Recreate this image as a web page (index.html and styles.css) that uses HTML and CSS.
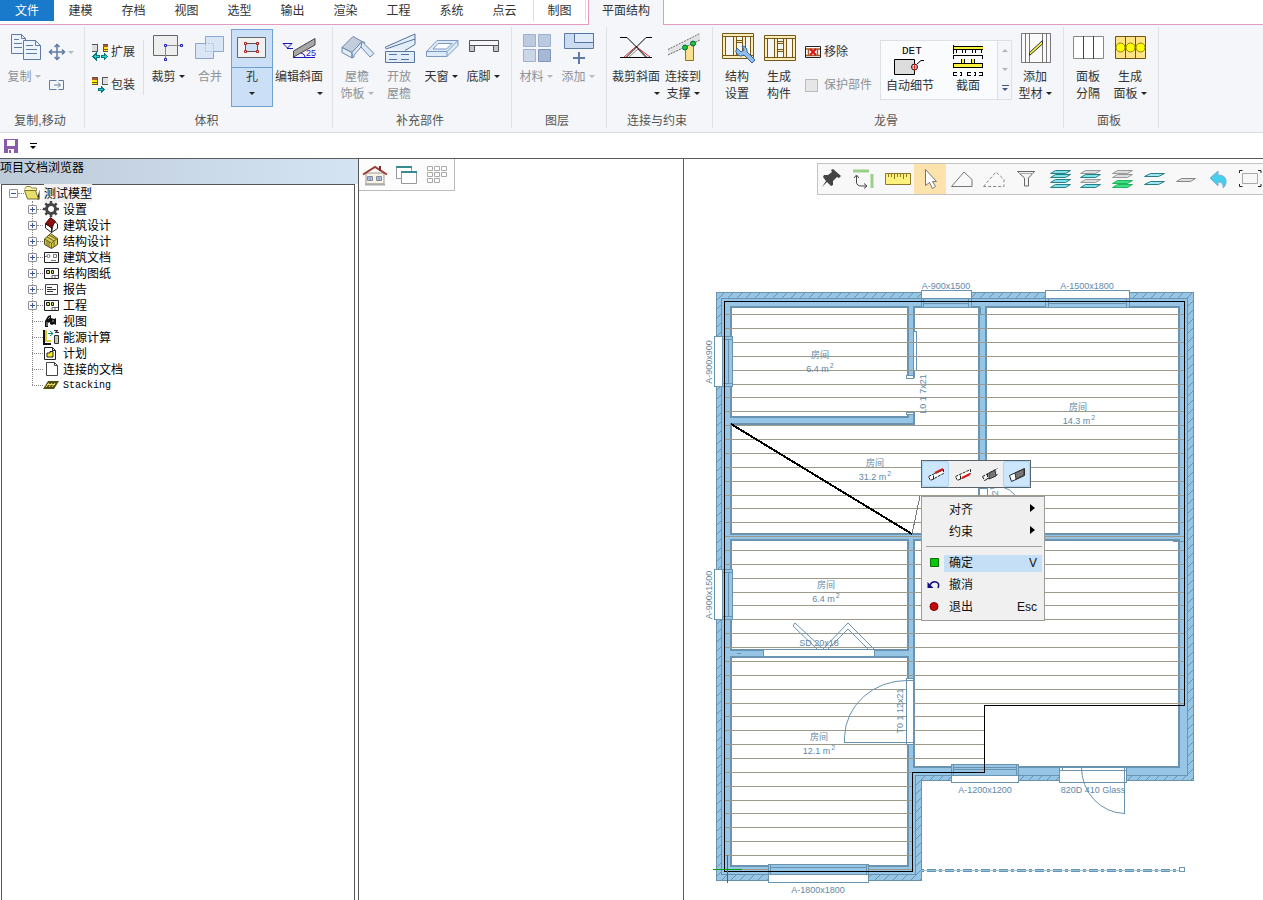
FILE: index.html
```html
<!DOCTYPE html>
<html lang="zh-CN">
<head>
<meta charset="utf-8">
<title>平面结构</title>
<link rel="stylesheet" href="styles.css">
</head>
<body>
<nav class="tabs">
  <button class="tab tab-file">文件</button>
  <button class="tab">建模</button>
  <button class="tab">存档</button>
  <button class="tab">视图</button>
  <button class="tab">选型</button>
  <button class="tab">输出</button>
  <button class="tab">渲染</button>
  <button class="tab">工程</button>
  <button class="tab">系统</button>
  <button class="tab">点云</button>
  <button class="tab tab-ruled">制图</button>
  <button class="tab tab-active">平面结构</button>
</nav>

<section class="ribbon">
  <div class="group">
    <div class="tools">
      <button class="big" disabled>
        <svg class="ico" viewBox="0 0 32 32" fill="#eef4fc" stroke="#5d7ba5"><path d="M3.500 3.500h10l4 4v15h-14z"/><path d="M13.500 3.500v4h4M6 8.500h5M6 12.500h8M6 16.500h8" fill="none"/><path d="M15.500 9.500h12l5 5v14h-17z"/><path d="M27.500 9.500v5h5M18 14.500h7M18 18.500h11M18 22.500h11" fill="none"/></svg>
        <span>复制<i class="caret"></i></span>
      </button>
      <div class="stack">
        <button class="small" disabled aria-label="移动"><svg class="ico16" viewBox="0 0 16 16" fill="none" stroke="#5d7ba5"><path d="M0 8h16M8 0v16M5.500 3L8 .5 10.500 3M5.500 13L8 15.500 10.500 13M3 5.500L.5 8 3 10.500M13 5.500L15.500 8 13 10.500" stroke-width="1.500"/></svg><i class="caret"></i></button>
        <button class="small" disabled aria-label="移动副本"><svg class="ico16" viewBox="0 0 16 16" fill="none" stroke="#5d7ba5"><path d="M7.500 3.500h-7v9h7M9.500 3.500h5v9h-5M5 8h6M9 5.500L11.500 8 9 10.500"/></svg></button>
      </div>
    </div>
    <h2>复制,移动</h2>
  </div>

  <div class="group">
    <div class="tools">
      <div class="stack stack-pack">
        <button class="small"><svg class="ico16" viewBox="0 0 16 16" shape-rendering="crispEdges"><path d="M0 .5h5.500v7H0" fill="#ddd" stroke="#555"/><path d="M16 .5h-5v7h5" fill="#ffe900" stroke="#555"/><path d="M11 1h5v2h-5z" fill="#b0552b"/><path d="M11 5h5v1h-5z" fill="#775a00"/><path d="M1 12.500l3-3v2h3v2H4v2zM15.500 12.500l-3-3v2h-3v2h3v2z" fill="#1ed6dc" stroke="#04777c"/></svg><span>扩展</span></button>
        <button class="small"><svg class="ico16" viewBox="0 0 16 16" shape-rendering="crispEdges"><path d="M0 .5h5v7H0" fill="#ffe900" stroke="#555"/><path d="M0 1h5v2H0z" fill="#b0552b"/><path d="M0 5h5v1H0z" fill="#775a00"/><path d="M16 .5h-5.500v7H16" fill="#ddd" stroke="#555"/><path d="M12 12.500l-3-3v2H6v2h3v2z" fill="#1ed6dc" stroke="#04777c"/></svg><span>包装</span></button>
      </div>
      <div class="rule"></div>
      <button class="big">
        <svg class="ico" viewBox="0 0 32 32"><path d="M1.500 4.500h24v20h-24z" fill="#eee" stroke="#666"/><path d="M14 14.500h15M13.500 14v14" stroke="#888"/><path d="M12.500 13.500h2v2h-2zM28.500 13.500h2v2h-2zM12.500 27.500h2v2h-2z" fill="#fff" stroke="#1818c0"/></svg>
        <span>裁剪<i class="caret"></i></span>
      </button>
      <button class="big" disabled>
        <svg class="ico" viewBox="0 0 32 32"><path d="M11.500 5.500h18v15h-10v7h-18v-15h10z" fill="#d9e6f6" stroke="#8ba5cc"/><path d="M11.500 12.500h8v8h-8z" fill="none" stroke="#8ba5cc" stroke-dasharray="1 2"/></svg>
        <span>合并</span>
      </button>
      <button class="big selected">
        <svg class="ico" viewBox="0 0 32 32"><path d="M1.500 6.500h28v20h-28z" fill="#f1f1f1" stroke="#666"/><path d="M9.500 12.500h12v8h-12z" fill="#cfe2f5" stroke="#555"/><path d="M8.500 11.500h2v2h-2zM20.500 11.500h2v2h-2zM8.500 19.500h2v2h-2zM20.500 19.500h2v2h-2z" fill="#fff" stroke="#b01818"/></svg>
        <span>孔</span><span><i class="caret"></i></span>
      </button>
      <button class="big wide">
        <svg class="ico" viewBox="0 0 32 32"><path d="M10.500 20L32 7.500V14L10.500 26z" fill="#a8a8a8" stroke="#444"/><path d="M0 12.500h9L4.500 17zM4 17.500h6M10 26.500h22M18 22q4 1 4 4" fill="none" stroke="#1818c0"/><text x="23" y="25" class="tiny-blue">25</text></svg>
        <span>编辑斜面</span><span class="right"><i class="caret"></i></span>
      </button>
    </div>
    <h2>体积</h2>
  </div>

  <div class="group">
    <div class="tools">
      <button class="big" disabled>
        <svg class="ico" viewBox="0 0 32 32" stroke="#6a86ad" stroke-linejoin="round"><path d="M1 16.500L12 5.500l9 5-10 11z" fill="#c3cddb"/><path d="M1 16.500v5l10 5.500v-5.500zM11 21.500l10-11 3 1-11 12.500v2l-2 1z" fill="#e2edfa"/><path d="M21 10.500l12 12-4 3.500-9-10z" fill="#dbe8f8"/></svg>
        <span>屋檐</span><span>饰板<i class="caret"></i></span>
      </button>
      <button class="big" disabled>
        <svg class="ico" viewBox="0 0 32 32" fill="#e2edfa" stroke="#55739c"><path d="M2.500 17.500V16L32 3v10.500l-10 6"/><path d="M3 18l29-10"/><path d="M2.500 20.500h29v11h-29z"/><path d="M6 23.500h8M18 23.500h8M6 28.500h8M18 28.500h8"/></svg>
        <span>开放</span><span>屋檐</span>
      </button>
      <button class="big">
        <svg class="ico" viewBox="0 0 32 32" fill="#dfeaf8" stroke="#7b98c2"><path d="M1.500 20.500L12 9.500h21v5l-11 11H1.500z"/><path d="M1.500 20.500h20.500v5M22 20.500l11-11" fill="none"/><path d="M8 18l5-5.500h14L21.500 18z" fill="#f8fbff"/></svg>
        <span>天窗<i class="caret"></i></span>
      </button>
      <button class="big">
        <svg class="ico" viewBox="0 0 32 32" stroke="#505058"><path d="M2.500 9.500h29v5h-29z" fill="#f7f7fa"/><path d="M2.500 14.500h5v6h-5zM26.500 14.500h5v6h-5z" fill="#c8c4d2"/></svg>
        <span>底脚<i class="caret"></i></span>
      </button>
    </div>
    <h2>补充部件</h2>
  </div>

  <div class="group">
    <div class="tools">
      <button class="big" disabled>
        <svg class="ico" viewBox="0 0 32 32" stroke="#9db1d0"><path d="M3.500 3.500h12v12h-12zM18.500 3.500h12v12h-12z" fill="#bccae0"/><path d="M3.500 18.500h12v12h-12z" fill="#cbd6e8"/><path d="M18.500 18.500h12v12h-12z" fill="#a8b8d2" stroke="#7f97bf"/></svg>
        <span>材料<i class="caret"></i></span>
      </button>
      <button class="big" disabled>
        <svg class="ico" viewBox="0 0 32 32"><path d="M2.500 2.500h29v15h-29z" fill="#cbdcf2" stroke="#5d7ba5"/><path d="M12.500 2.500h19v9h-19z" fill="#dfeafa" stroke="#55739c"/><path d="M17 21v12M11 27h12" stroke="#5d7ba5" stroke-width="2"/></svg>
        <span>添加<i class="caret"></i></span>
      </button>
    </div>
    <h2>图层</h2>
  </div>

  <div class="group group-join">
    <div class="tools">
      <button class="big wide">
        <svg class="ico" viewBox="0 0 32 32" fill="none"><path d="M4 26L16 15.500 30 26" stroke="#e03030"/><path d="M9 26l9-8 7 8" stroke="#888"/><path d="M0 6.500h7l20 20M32 6.500h-6l-20 20M0 26.500h32" stroke="#000"/></svg>
        <span>裁剪斜面</span><span class="right"><i class="caret"></i></span>
      </button>
      <button class="big">
        <svg class="ico" viewBox="0 0 32 32"><path d="M18.500 14l8-3v18.500h-8z" fill="#f9e08a" stroke="#8a7330"/><path d="M1 19L33 3v7L1 24z" fill="#e3e3e3"/><path d="M1 18.500L33 2.500M1 24L33 9" stroke="#666" stroke-dasharray="2 1"/><circle cx="18" cy="16.500" r="2.500" fill="#18c830" stroke="#064"/><circle cx="26" cy="12.500" r="2.500" fill="#18c830" stroke="#064"/></svg>
        <span>连接到</span><span>支撑<i class="caret"></i></span>
      </button>
    </div>
    <h2>连接与约束</h2>
  </div>

  <div class="group">
    <div class="tools">
      <button class="big">
        <svg class="ico" viewBox="0 0 32 32"><path d="M1.500 2.500h31v25h-31z" fill="#f6f6f6" stroke="none"/><path d="M1.500 2.500h31v3h-31zM1.500 24.500h31v3h-31zM1.500 5.500h3v19h-3zM12.500 5.500h3v19h-3zM21.500 5.500h3v19h-3zM29.500 5.500h3v19h-3zM15.500 9.500h6v2h-6z" fill="#ffecb8" stroke="#725716"/><path d="M16 17a5 5 0 0 0 7 7l8 8 3-3-8-8a5 5 0 0 0-5-6l2 4-3 2z" fill="#8fbdec" stroke="#31639e"/></svg>
        <span>结构</span><span>设置</span>
      </button>
      <button class="big">
        <svg class="ico" viewBox="0 0 32 32"><path d="M1.500 4.500h31v3h-31zM1.500 26.500h31v3h-31zM1.500 7.500h3v19h-3zM11.500 7.500h3v19h-3zM20.500 7.500h3v19h-3zM29.500 7.500h3v19h-3zM14.500 10.500h6v2h-6zM14.500 18.500h6v2h-6z" fill="#ffecb8" stroke="#725716"/></svg>
        <span>生成</span><span>构件</span>
      </button>
      <div class="stack stack-frame">
        <button class="small"><svg class="ico16" viewBox="0 0 16 16"><path d="M.5 2.500h15v11H.5z" fill="#fff" stroke="#222"/><path d="M1 5h14M1 11.500h14M3.500 5v6M12.500 5v6" stroke="#a65a28" stroke-width="1.500"/><path d="M5 5l6 6M11 5l-6 6" stroke="#e01010" stroke-width="2"/></svg><span>移除</span></button>
        <label class="small muted"><input type="checkbox" disabled><span>保护部件</span></label>
      </div>
      <div class="gallery">
        <button class="card">
          <svg viewBox="0 0 36 36"><text x="10" y="12" class="det">DET</text><path d="M2.500 17.500h20v15h-20z" fill="#ddd" stroke="#000"/><circle cx="22.500" cy="25" r="3" fill="#fff" stroke="#000"/><path d="M19 25h7M22.500 21.500v7" stroke="#d22"/><path d="M25 22l4-3.500h3" stroke="#000" fill="none"/></svg>
          <span>自动细节</span>
        </button>
        <button class="card">
          <svg viewBox="0 0 36 36" shape-rendering="crispEdges"><path d="M3 4h30v3H3zM3 22h30v3H3zM12 17h2v5h-2zM22 17h2v5h-2z" fill="#fbf03a"/><path d="M3 4.500h30M3 7.500h30M3.500 3v9M6.500 8v3M12.500 8v3M15.500 8v3M22.500 8v3M25.500 8v3M31.500 8v3M3 13.500h30M3.500 13v4M32.500 13v4M11.500 17v5M14.500 17v5M21.500 17v5M24.500 17v5M3 21.500h30M3 25.500h30M3.500 21v4M32.500 21v4M7 30.500H3.500v3H7M10 30.500h1v3h-1M21 30.500h-4v3h4M24 30.500h1v3h-1M29 30.500h3.500v3H29" fill="none" stroke="#000"/></svg>
          <span>截面</span>
        </button>
        <div class="scroller">
          <button aria-label="上一行"><i class="caret up"></i></button>
          <button aria-label="下一行"><i class="caret dim"></i></button>
          <button aria-label="更多"><i class="caret more"></i></button>
        </div>
      </div>
      <button class="big">
        <svg class="ico" viewBox="0 0 32 32"><path d="M2.500 2.500h29v29h-29z" fill="#fafafa" stroke="#777"/><path d="M6.500 3v28M10.500 3v28M23.500 3v28M27.500 3v28" stroke="#777"/><path d="M10.500 21.500L23.500 9.500v3.500l-13 11.500z" fill="#f6ee40" stroke="#333"/></svg>
        <span>添加</span><span>型材<i class="caret"></i></span>
      </button>
    </div>
    <h2>龙骨</h2>
  </div>

  <div class="group">
    <div class="tools">
      <button class="big">
        <svg class="ico" viewBox="0 0 32 32"><path d="M1.500 5.500h30v22h-30z" fill="#fff" stroke="#888"/><path d="M11.500 5v23M21.500 5v23" stroke="#c01010"/></svg>
        <span>面板</span><span>分隔</span>
      </button>
      <button class="big">
        <svg class="ico" viewBox="0 0 32 32"><path d="M1.500 5.500h30v22h-30z" fill="#ffe385" stroke="#6b5514"/><path d="M11.500 5v23M21.500 5v23" stroke="#6b5514"/><g fill="#ff0" stroke="#8f7d10"><circle cx="6.500" cy="16.500" r="4.500"/><circle cx="16.500" cy="16.500" r="4.500"/><circle cx="26.500" cy="16.500" r="4.500"/></g></svg>
        <span>生成</span><span>面板<i class="caret"></i></span>
      </button>
    </div>
    <h2>面板</h2>
  </div>
</section>

<div class="quick">
  <button aria-label="保存"><svg viewBox="0 0 14 14"><path d="M0 0h14v14H0z" fill="#8a5bab"/><path d="M3 1h8v6H3zM4 10h6v4H4z" fill="#fff"/><path d="M5 11h2v3H5z" fill="#8a5bab"/></svg></button>
  <button aria-label="自定义工具栏"><i class="caret more black"></i></button>
</div>

<main class="work">
  <aside class="browser">
    <h1>项目文档浏览器</h1>
    <div class="tree">
      <div class="node root"><button class="exp" aria-label="折叠"></button><i class="dots"></i>
        <svg viewBox="0 0 16 16"><path d="M.5 4.500l2-3h4l1 1.500h5v3" fill="#fff6a8" stroke="#8a8a50"/><path d="M13 14.500l2.500-10v10z" fill="#222"/><path d="M.5 5.500h11l3 8.500h-11z" fill="#e8de6c" stroke="#77722f"/></svg><span class="hot">测试模型</span></div>
      <ul>
        <li class="node"><button class="exp plus" aria-label="展开"></button><i class="dots"></i><svg viewBox="0 0 16 16"><circle cx="8" cy="8" r="4.500" fill="none" stroke="#444" stroke-width="3"/><path d="M8 0v3M8 13v3M0 8h3M13 8h3M2.300 2.300l2.200 2.200M11.500 11.500l2.200 2.200M2.300 13.700l2.200-2.200M11.500 4.500l2.200-2.200" stroke="#444" stroke-width="2.500"/></svg><span>设置</span></li>
        <li class="node"><button class="exp plus" aria-label="展开"></button><i class="dots"></i><svg viewBox="0 0 16 16"><path d="M2.500 7v4l6 4.500V10zM8.500 15.500l6-4V7L11 4z" fill="#fff" stroke="#222"/><path d="M2.500 6.500L7.500.5l5 4-4.500 6z" fill="#8c1010" stroke="#400"/></svg><span>建筑设计</span></li>
        <li class="node"><button class="exp plus" aria-label="展开"></button><i class="dots"></i><svg viewBox="0 0 16 16"><path d="M1.500 6l6-5.500 7 5v6l-6 4-7-4z" fill="#d8cc58" stroke="#4c4510"/><path d="M1.500 6l7 4 6-4.500M8.500 10v5M4 7.500v5M6 9v5M11 8.500v5M4 4l7 4M6 2l7 4" fill="none" stroke="#6b6420"/></svg><span>结构设计</span></li>
        <li class="node"><button class="exp plus" aria-label="展开"></button><i class="dots"></i><svg viewBox="0 0 16 16"><path d="M1.500 3.500h14v10h-14z" fill="#fff" stroke="#222"/><circle cx="5.500" cy="7" r="1.500" fill="none" stroke="#777"/><path d="M10.500 5.500h3v3h-3zM8 11.500h5M2 7.500h2" fill="none" stroke="#777"/></svg><span>建筑文档</span></li>
        <li class="node"><button class="exp plus" aria-label="展开"></button><i class="dots"></i><svg viewBox="0 0 16 16"><path d="M1.500 3.500h14v10h-14z" fill="#fff" stroke="#222"/><path d="M3.500 5.500h3v3h-3zM8.500 5.500h2v3h-2z" fill="#dd5" stroke="#222"/><path d="M9 13v-2.500h6M12 11v2" stroke="#666" fill="none"/></svg><span>结构图纸</span></li>
        <li class="node"><button class="exp plus" aria-label="展开"></button><i class="dots"></i><svg viewBox="0 0 16 16"><path d="M2.500 3.500h12v10h-12z" fill="#fff" stroke="#444"/><path d="M4 6.500h5M4 8.500h9M4 10.500h6" stroke="#333"/></svg><span>报告</span></li>
        <li class="node"><button class="exp plus" aria-label="展开"></button><i class="dots"></i><svg viewBox="0 0 16 16"><path d="M1.500 3.500h14v10h-14z" fill="#fff" stroke="#222"/><path d="M3.500 5.500h3v3h-3zM8.500 5.500h2v3h-2z" fill="#dd5" stroke="#222"/><path d="M9 13v-2.500h6M12 11v2" stroke="#666" fill="none"/></svg><span>工程</span></li>
        <li class="node leaf"><i class="dots"></i><svg viewBox="0 0 16 16"><path d="M2 8l3-5 3-1v3l3 1 2-1v7l-2-1-2 1-2-1v-2l-2 1v4H2z" fill="#111"/><path d="M5 6l2-2M4 9v4M9 8h2" stroke="#aaa"/></svg><span>视图</span></li>
        <li class="node leaf"><i class="dots"></i><svg viewBox="0 0 16 16"><path d="M1 1v14h7" fill="none" stroke="#111" stroke-width="2"/><path d="M3 1v11h5" fill="none" stroke="#dc3" stroke-width="2"/><path d="M5 4.500h5M7 2l3 2.500L7 7" stroke="#088" fill="none"/><path d="M11.500 6.500h4v8h-4z" fill="#bfcfae" stroke="#333"/><path d="M11 1.500h4l-3 2h4" fill="none" stroke="#333"/></svg><span>能源计算</span></li>
        <li class="node leaf"><i class="dots"></i><svg viewBox="0 0 16 16"><path d="M1.500 2.500h8l3 3v9h-11z" fill="#fff" stroke="#222"/><path d="M9.500 2.500v3h3" fill="none" stroke="#222"/><path d="M4 12V8h3V6.500h3V12z" fill="#ffee20" stroke="#222"/></svg><span>计划</span></li>
        <li class="node leaf"><i class="dots"></i><svg viewBox="0 0 16 16"><path d="M3.500 1.500h8l3 3v10h-11z" fill="#fff" stroke="#444"/><path d="M11.500 1.500v3h3" fill="none" stroke="#444"/></svg><span>连接的文档</span></li>
        <li class="node leaf"><i class="dots"></i><svg viewBox="0 0 16 16"><path d="M5 4h11l-5 8H0z" fill="#554d10"/><path d="M3 10l3-4M6 10l3-4M9 10l3-4M4 7.500h8" stroke="#e5dc60"/></svg><span class="latin">Stacking</span></li>
      </ul>
    </div>
  </aside>

  <section class="pane-left">
    <div class="viewbar">
      <button aria-label="主视图"><svg viewBox="0 1 32 31"><path d="M7 15h18v11H7z" fill="#f7f3e4" stroke="#999"/><path d="M6 25.500h20v2H6z" fill="#aaa"/><path d="M4 16.500L16 9l12 7.500" fill="none" stroke="#9c3b33" stroke-width="2"/><path d="M20 8h2v5h-2z" fill="#7d2f2a"/><path d="M8.500 18.500h5v4h-5zM17.500 18.500h5v4h-5z" fill="#a9c9ea" stroke="#889"/><path d="M11 18v5M20 18v5" stroke="#889"/></svg></button>
      <button aria-label="窗口"><svg viewBox="0 0 32 31"><path d="M5.500 8.500h15v11h-15z" fill="#fff" stroke="#999"/><path d="M5 8h16" stroke="#3b8b8d" stroke-width="2"/><path d="M10.500 13.500h15v11h-15z" fill="#fff" stroke="#999"/><path d="M10 13h16" stroke="#3b8b8d" stroke-width="2"/></svg></button>
      <button aria-label="网格"><svg viewBox="0 0 32 31"><path d="M4.500 7.500h5v4h-5zM11.500 7.500h5v4h-5zM18.500 7.500h5v4h-5zM4.500 13.500h5v4h-5zM11.500 13.500h5v4h-5zM18.500 13.500h5v4h-5zM4.500 19.500h5v4h-5zM11.500 19.500h5v4h-5z" fill="#fff" stroke="#aaa"/></svg></button>
    </div>
  </section>

  <section class="pane-plan">
    <svg class="plan" viewBox="684 159 579 741">
      <defs>
        <pattern id="hatch" width="9" height="9" patternUnits="userSpaceOnUse"><path d="M-1 10L10-1" stroke="#6a93b0"/></pattern>
      </defs>
      <g shape-rendering="crispEdges" stroke="#6a93b0" fill="#96c5e5">
        <path d="M716.500 292.500h477v488h-272v100h-205z"/>
        <path d="M716.500 292.500h477v488h-272v100h-205z" fill="url(#hatch)" shape-rendering="auto"/>
        <path d="M721.500 298.500h466v477h-272v99h-194z"/>
        <g fill="#fff" stroke-width="2">
          <path d="M731 307h177v110H731z"/>
          <path d="M914 307h65v227H731V424h183z"/>
          <path d="M986 307h193v227H986z"/>
          <path d="M731 540h177v110H731z"/>
          <path d="M731 657h177v209H731z"/>
          <path d="M914 540h265v227H914z"/>
        </g>
        <path d="M907 378h8v34h-8z" fill="#fff" stroke="none"/>
        <path d="M906.500 375.500h7v3h-7zM906.500 412.500h7v2h-7z" fill="#fff"/>
        <path d="M913.500 331.500h3v39h-3z" fill="#fff"/>
        <path d="M979 488h8v45h-8z" fill="#fff"/>
      </g>
      <g shape-rendering="crispEdges" fill="none" stroke="#9c998a">
        <path d="M725 314.500h459M725 328.500h459M725 342.500h459M725 356.500h459M725 370.500h459M725 384.500h459M725 397.500h459M725 411.500h459M725 425.500h459M725 439.500h459M725 453.500h459M725 467.500h459M725 481.500h459M725 495.500h459M725 508.500h459M725 522.500h459M725 536.500h459M725 550.500h459M725 564.500h459M725 578.500h459M725 592.500h459M725 605.500h459M725 619.500h459M725 633.500h459M725 647.500h459M725 661.500h459M725 675.500h459M725 689.500h459M725 703.500h459"/>
        <path d="M725 716.500h259M725 730.500h259M725 744.500h259M725 758.500h259"/>
        <path d="M725 772.500h187M725 786.500h187M725 800.500h187M725 813.500h187M725 827.500h187M725 841.500h187M725 855.500h187M725 869.500h187"/>
      </g>
      <g shape-rendering="crispEdges" stroke="#6a93b0">
        <path d="M921.500 290.500h50v8h-50zM1045.500 290.500h84v8h-84zM714.500 336.500h8v50h-8zM714.500 569.500h8v50h-8zM768.500 874.500h100v8h-100zM951.500 775.500h67v7h-67z" fill="#fff"/>
        <path d="M921.500 298.500h50v9h-50zM1045.500 298.500h84v9h-84zM722.500 336.500h10v50h-10zM722.500 569.500h10v50h-10zM768.500 864.500h100v10h-100zM951.500 764.500h67v11h-67z" fill="#96c5e5"/>
        <path d="M923.500 299v8M968.500 299v8M1048.500 299v8M1126.500 299v8M923 303.500h46M1048 303.500h79M723 339.500h10M723 383.500h10M728.500 339v44M723 572.500h10M723 616.500h10M728.500 572v44M770.500 865v9M866.500 865v9M770 867.500h96M953.500 765v10M1016.500 765v10M953 767.500h63M953 769.500h63" fill="none"/>
        <path d="M1059.500 767.500h67v15h-67z" fill="#fff"/>
        <path d="M1060 770.500h66M1062.500 767v4M1124.500 767v46.500" fill="none"/>
        <path d="M763.500 649.500h111v7h-111zM906.500 678.500h7v66h-7z" fill="#fff"/>
        <path d="M844 742.500h70M844.500 742v-5M906 680.500h8M737 653.500h4M978.500 307v8M980.500 307v8M1171 539.500h8M1173 541.500h11" fill="none"/>
      </g>
      <g fill="none" stroke="#6a93b0">
        <path d="M844.500 737A62 58 0 0 1 907 680.500M1081.500 767A44 46 0 0 0 1124.500 813.500M990 489q15-6 25 6"/>
        <path d="M793 626l2-3 27 25M793 626l24 23M823 649l25-26 26 26M828 649l20-20 20 20"/>
      </g>
      <g class="plan-text">
        <text x="946" y="289">A-900x1500</text>
        <text x="1087" y="289">A-1500x1800</text>
        <text x="985" y="793">A-1200x1200</text>
        <text x="1093" y="793">820D 410 Glass</text>
        <text x="818" y="893">A-1800x1800</text>
        <text x="819" y="646">SD 20x18</text>
        <text transform="translate(712 362) rotate(-90)">A-900x900</text>
        <text transform="translate(712 595) rotate(-90)">A-900x1500</text>
        <text transform="translate(926 394) rotate(-90)">L0 1 7x21</text>
        <text transform="translate(903 711) rotate(-90)">T0 1 12x21</text>
        <text transform="translate(998 493) rotate(-90)">2</text>
        <text x="820" y="358">房间</text><text x="820" y="372">6.4 m<tspan class="sup" dx="1" dy="-4">2</tspan></text>
        <text x="875" y="466">房间</text><text x="875" y="480">31.2 m<tspan class="sup" dx="1" dy="-4">2</tspan></text>
        <text x="1078" y="410">房间</text><text x="1079" y="424">14.3 m<tspan class="sup" dx="1" dy="-4">2</tspan></text>
        <text x="826" y="588">房间</text><text x="826" y="602">6.4 m<tspan class="sup" dx="1" dy="-4">2</tspan></text>
        <text x="819" y="740">房间</text><text x="819" y="754">12.1 m<tspan class="sup" dx="1" dy="-4">2</tspan></text>
      </g>
      <g fill="none" stroke="#000" shape-rendering="crispEdges">
        <path d="M724.500 301.500h460v404h-200v67h-72v99h-188z"/>
        <path d="M731 424l181 110" stroke-width="2"/>
        <path d="M912 534l8-38" stroke="#777"/>
        <path d="M921 870h258" stroke="#6a93b0" stroke-width="3" stroke-dasharray="3 3 9 3"/>
        <path d="M921 870h258" stroke="#96c5e5"/>
        <path d="M1179.500 867.500h5v4h-5z" fill="#fff" stroke="#6a93b0"/>
        <path d="M713 869.500h29M727.500 855v28" stroke="#00a010"/>
      </g>
    </svg>

    <div class="toolbar">
      <button aria-label="固定"><svg viewBox="0 0 32 30"><path d="M15 5l8 7-2 2-2-1-4 4v4l-2 1-4-4-5 5 4-6-3-4 1-2h4l4-3-1-2z" fill="#444"/></svg></button>
      <button aria-label="旋转"><svg viewBox="4 0 32 30" fill="none"><path d="M7 7h16M26 10v14" stroke="#9ad08a" stroke-width="3"/><path d="M10.500 12v6q0 4 5 4h5M8 14l2.500-3 2.500 3M18 19.500l3 2.500-3 2.500" stroke="#444"/></svg></button>
      <button aria-label="测量"><svg viewBox="0 0 32 30"><path d="M3.500 9.500h25v11h-25z" fill="#fff27c" stroke="#8f7628"/><path d="M6.500 10v3M9.500 10v3M12.500 10v5M15.500 10v3M18.500 10v3M21.500 10v5M24.500 10v3" stroke="#8f7628"/></svg></button>
      <button class="on" aria-label="选择"><svg viewBox="0 0 32 30"><path d="M11.500 5.500v16l4-3 3 6 3-2-3-5h4z" fill="#fff" stroke="#777"/></svg></button>
      <button aria-label="多边形"><svg viewBox="0 0 32 30"><path d="M5.500 22.500L18 8l8 7.500v7z" fill="none" stroke="#777"/></svg></button>
      <button aria-label="虚线多边形"><svg viewBox="0 0 32 30"><path d="M5.500 22.500L18 8l8 7.500v7z" fill="none" stroke="#888" stroke-dasharray="3 2"/></svg></button>
      <button aria-label="筛选"><svg viewBox="0 0 32 30"><path d="M7.500 7.500h17l-6 6.500v8h-4v-8z" fill="#f4f4f4" stroke="#666"/><path d="M9 9.500h14" stroke="#aaa"/></svg></button>
      <button aria-label="全部图层"><svg viewBox="0 0 32 30" fill="#7fe3ea" stroke="#2b7d85"><path d="M8.500 23.500l5-3h15l-5 3zM8.500 18.500l5-3h15l-5 3zM8.500 13.500l5-3h15l-5 3zM8.500 9.500l5-3h15l-5 3z"/></svg></button>
      <button aria-label="部分图层"><svg viewBox="0 0 32 30" fill="#7fe3ea" stroke="#2b7d85"><path d="M6.500 23.500l5-3h15l-5 3zM6.500 13.500l5-3h15l-5 3z"/><path d="M6.500 18.500l5-3h15l-5 3zM6.500 9.500l5-3h15l-5 3z" fill="#ddd" stroke="#999"/></svg></button>
      <button aria-label="当前图层"><svg viewBox="0 0 32 30"><path d="M6.500 13.500l5-3h15l-5 3zM6.500 9.500l5-3h15l-5 3z" fill="#ddd" stroke="#999"/><path d="M6.500 19.500l5-3h15l-5 3zM6.500 23.500l5-3h15l-5 3z" fill="#3de080" stroke="#23b060"/></svg></button>
      <button aria-label="两层"><svg viewBox="0 0 32 30" fill="#9fe9ee" stroke="#2b7d85"><path d="M6.500 20.500l6-3h14l-6 3zM6.500 12.500l6-3h14l-6 3z"/></svg></button>
      <button aria-label="单层"><svg viewBox="0 0 32 30"><path d="M6.500 17.500l5-3h14l-5 3z" fill="#ddd" stroke="#888"/></svg></button>
      <button aria-label="返回"><svg viewBox="0 0 32 30"><path d="M8 14l8-7v4q9 0 8 8-1 4-3 5 1-6-5-6v4z" fill="#45cfe9" stroke="#8ad"/></svg></button>
      <button aria-label="全屏"><svg viewBox="0 0 32 30" fill="none"><path d="M8.500 9.500h15v10h-15z" stroke="#aaa"/><path d="M5.500 9v-2.500h3M24 6.500h3V9M5.500 20v2.500h3M24 22.500h3V20" stroke="#222"/></svg></button>
    </div>

    <div class="mini">
      <button class="on" aria-label="上边"><svg viewBox="0 0 27 26"><path d="M6.500 15.500l15-7v4l-13 7z" fill="#fff" stroke="#222" stroke-dasharray="3 1"/><path d="M11.500 14.500v4M14 12l7-3" stroke="#222"/><path d="M13 12l8-4" stroke="#e01818" stroke-width="2"/></svg></button>
      <button aria-label="下边"><svg viewBox="0 0 27 26"><path d="M6.500 15.500l15-7v4l-13 7z" fill="#fff" stroke="#222" stroke-dasharray="3 1"/><path d="M11.500 14.500v4" stroke="#222"/><path d="M13 17l8-4" stroke="#e01818" stroke-width="2"/></svg></button>
      <button aria-label="中间"><svg viewBox="0 0 27 26"><path d="M6.500 15.500l15-8M8.500 19.500l13-6M6.500 15.500l2 4M11.500 13v5" fill="none" stroke="#222" stroke-dasharray="3 1"/><path d="M13 12l6-3 1 6-7 3z" fill="#777" stroke="#333"/></svg></button>
      <button class="on" aria-label="全部"><svg viewBox="0 0 27 26"><path d="M6.500 14.500l15-7v7l-13 6z" fill="#fff" stroke="#222"/><path d="M12 12l9-4v6l-8 4z" fill="#777" stroke="#333"/></svg></button>
    </div>

    <div class="menu" role="menu">
      <button role="menuitem"><i class="mark"></i><span>对齐</span><i class="sub"></i></button>
      <button role="menuitem"><i class="mark"></i><span>约束</span><i class="sub"></i></button>
      <hr>
      <button role="menuitem" class="hover"><svg class="mark" viewBox="0 0 16 16"><path d="M4.500 3.500h8v8h-8z" fill="#08c808" stroke="#067006"/></svg><span>确定</span><kbd>V</kbd></button>
      <button role="menuitem"><svg class="mark" viewBox="0 0 16 16"><path d="M4 8q2-4 6-3 4 1 2 6" fill="none" stroke="#101080" stroke-width="1.500"/><path d="M1.500 5v6h6z" fill="#101080"/></svg><span>撤消</span></button>
      <button role="menuitem"><svg class="mark" viewBox="0 0 16 16"><circle cx="8" cy="7.500" r="4" fill="#c80808" stroke="#700"/></svg><span>退出</span><kbd>Esc</kbd></button>
    </div>
  </section>
</main>
</body>
</html>
```

FILE: styles.css
```css
* { box-sizing: border-box; }

body {
  margin: 0;
  height: 100vh;
  display: flex;
  flex-direction: column;
  overflow: hidden;
  background: #fff;
  color: #333;
  font: 12px/16px "Liberation Sans", "Noto Sans CJK SC", sans-serif;
}

button {
  margin: 0;
  padding: 0;
  border: 0;
  background: none;
  color: inherit;
  font: inherit;
}

svg { display: block; overflow: visible; flex: none; }
h1, h2, ul { margin: 0; padding: 0; font: inherit; list-style: none; }

/* Tabs */
.tabs {
  display: flex;
  flex: none;
  height: 25px;
  border-bottom: 1px solid #e39cbf;
}
.tab { width: 53px; height: 21px; }
.tab-file { width: 54px; background: #1979ca; color: #fff; }
.tab-ruled {
  margin-left: 2px;
  border-left: 1px solid #ddd;
  border-right: 1px solid #ddd;
}
.tab-active {
  width: 76px;
  height: 25px;
  padding-bottom: 4px;
  margin-left: 2px;
  border: solid #e39cbf;
  border-width: 0 1px;
  background: #f4f6f9;
}

/* Ribbon */
.ribbon {
  display: flex;
  flex: none;
  height: 108px;
  background: #f4f6f9;
  border-bottom: 1px solid #dadbdd;
}
.group {
  position: relative;
  display: flex;
  flex-direction: column;
  padding: 4px 8px 0 3px;
}
.group-join { padding-right: 9px; }
.group::after {
  content: "";
  position: absolute;
  right: 0;
  top: 2px;
  bottom: 4px;
  width: 1px;
  background: #dfe1e4;
}
.tools { display: flex; height: 78px; }
.group h2 { margin-top: 6px; text-align: center; color: #555; }

.big {
  width: 42px;
  height: 78px;
  display: flex;
  flex-direction: column;
  align-items: center;
  line-height: 17px;
  white-space: nowrap;
}
.big.wide { width: 52px; }
.ico { width: 32px; height: 32px; margin: 2px 0 6px; }
.big span { min-height: 17px; }
.big .right { align-self: flex-end; padding-right: 2px; }
.big.selected { background: #cbe0f6; border: 1px solid #6fa0d0; padding: 0; position: relative; }
.big.selected .ico { margin-top: 1px; }
.big.selected::after {
  content: "";
  position: absolute;
  left: 0;
  right: 0;
  top: 37px;
  height: 1px;
  background: #6fa0d0;
}
button:disabled, .muted { color: #8f9194; }

.caret {
  display: inline-block;
  margin-left: 3px;
  border: 3px solid transparent;
  border-top-color: #222;
  border-bottom: 0;
  vertical-align: 3px;
}
.big.selected .caret, .right .caret { margin-left: 0; }
button:disabled .caret, .caret.dim { border-top-color: #b4b7bb; }
.caret.up { border-top: 0; border-bottom: 3px solid #b4b7bb; }
.caret.more { position: relative; border-top-color: #445a7c; }
.caret.more::before {
  content: "";
  position: absolute;
  left: -3px;
  top: -6px;
  width: 7px;
  height: 1px;
  background: #445a7c;
}
.caret.black { border-top-color: #000; }
.caret.black::before { background: #000; }

.stack { display: flex; flex-direction: column; gap: 11px; padding-top: 12px; width: 32px; }
.stack-pack { width: 55px; }
.stack-frame { width: 80px; }
.small { display: flex; align-items: center; gap: 3px; height: 22px; padding-left: 4px; white-space: nowrap; }
.stack-frame .small { padding-left: 5px; }
.small .caret { margin-left: 0; }
.small input {
  appearance: none;
  margin: 0 3px 0 0;
  width: 13px;
  height: 13px;
  border: 1px solid #bbb;
  background: #e6e6e6;
}
.ico16 { width: 16px; height: 16px; }
.rule { width: 1px; height: 55px; margin: 11px 3px 0 0; background: #dcdee1; }
.tiny-blue { font: 9px "Liberation Sans", sans-serif; fill: #1818c0; }
.det { font: 11px "Liberation Mono", monospace; fill: #000; }

.gallery {
  display: flex;
  width: 132px;
  height: 60px;
  margin: 11px 2px 0 0;
  border: 1px solid #dcdfe3;
  background: #fafbfd;
}
.card { width: 58px; display: flex; flex-direction: column; align-items: center; padding-top: 1px; white-space: nowrap; }
.card svg { width: 36px; height: 36px; }
.scroller { flex: 1; display: flex; flex-direction: column; border-left: 1px solid #dcdfe3; background: #f4f6f9; }
.scroller button { flex: 1; display: flex; align-items: center; justify-content: center; }
.scroller .caret { margin: 0; }

.quick {
  flex: none;
  display: flex;
  align-items: center;
  gap: 9px;
  height: 26px;
  padding-left: 4px;
  border-bottom: 1px solid #5c5c5c;
}
.quick button { height: 18px; display: flex; align-items: center; }
.quick button + button { padding-top: 3px; }
.quick svg { width: 14px; height: 14px; }

/* Workspace */
.work { flex: 1; min-height: 0; display: flex; }

.browser {
  flex: none;
  width: 359px;
  display: flex;
  flex-direction: column;
  border-right: 1px solid #555;
  color: #000;
}
.browser h1 {
  height: 25px;
  flex: none;
  line-height: 19px;
  background: linear-gradient(90deg, #bdcbd9, #d5e4f3);
}
.tree {
  flex: 1;
  margin: 0 3px 0 1px;
  padding-left: 7px;
  border: 1px solid #555;
  border-bottom: 0;
}
.tree ul {
  position: relative;
  padding-left: 19px;
}
.tree ul::before {
  content: "";
  position: absolute;
  left: 23px;
  top: 0;
  bottom: 8px;
  border-left: 1px dotted #888;
}
.node { display: flex; align-items: center; height: 16px; white-space: nowrap; }
.node svg { width: 16px; height: 16px; margin-right: 4px; }
.node span { padding-top: 2px; }
.exp {
  position: relative;
  width: 9px;
  height: 9px;
  border: 1px solid #919191;
  border-radius: 1px;
  background: #fafafa;
}
.exp::before, .exp.plus::after {
  content: "";
  position: absolute;
  left: 1px;
  top: 3px;
  width: 5px;
  height: 1px;
  background: #3a55a0;
}
.exp.plus::after { transform: rotate(90deg); }
.dots { width: 6px; height: 1px; border-top: 1px dotted #888; }
.leaf .dots { width: 11px; margin-left: 4px; }
.hot { background: #f0f0f0; }
.latin { font: 10px/16px "Liberation Mono", monospace; }

.pane-left { flex: none; width: 325px; border-right: 1px solid #1c8a1c; }
.viewbar {
  display: flex;
  width: 96px;
  height: 32px;
  border: solid #bdbdbd;
  border-width: 0 1px 1px 0;
  background: #fcfcfc;
}
.viewbar svg { width: 32px; height: 31px; }
.viewbar button { width: 32px; }

.pane-plan {
  flex: 1;
  min-width: 0;
  position: relative;
  overflow: hidden;
}
.plan { position: absolute; left: 0; top: 0; width: 579px; height: 741px; }
.plan-text { font: 9px "Liberation Sans", "Noto Sans CJK SC", sans-serif; fill: #6288a6; text-anchor: middle; }
.sup { font-size: 7px; }

.toolbar {
  position: absolute;
  top: 4px;
  right: -3px;
  display: flex;
  border: solid #c3c3c3;
  border-width: 1px 0;
  background: #f8f8f8;
  box-shadow: -1px 0 #c3c3c3;
}
.toolbar button { width: 32px; height: 30px; }
.toolbar svg { width: 32px; height: 30px; }
.toolbar .on { background: #fee2ab; }

.mini {
  position: absolute;
  left: 237px;
  top: 301px;
  display: flex;
  border: 1px solid #5d6469;
  background: #f0f0f0;
}
.mini button { width: 27px; height: 26px; border-radius: 3px; }
.mini svg { width: 27px; height: 26px; }
.mini .on { background: #cce7fd; box-shadow: inset 0 0 0 1px #a9d4f5; }

.menu {
  position: absolute;
  left: 237px;
  top: 337px;
  width: 124px;
  padding: 2px 2px 2px 4px;
  border: 1px solid #9b9b9b;
  background: #f0f0f0;
  color: #111;
}
.menu button { display: flex; align-items: center; width: 100%; height: 22px; text-align: left; }
.mark { width: 16px; height: 16px; margin-right: 2px; }
.menu span { flex: 1; padding-left: 5px; }
.menu kbd { padding-right: 5px; font: inherit; }
.menu hr { margin: 3px 0 5px; border: 0; border-top: 1px solid #a0a0a0; }
.menu .hover { background: linear-gradient(#c5dff6, #c5dff6) right center / 98px 17px no-repeat; }
.sub { margin: 0 7px 4px 0; border: 4px solid transparent; border-left: 5px solid #000; border-right: 0; }
```
